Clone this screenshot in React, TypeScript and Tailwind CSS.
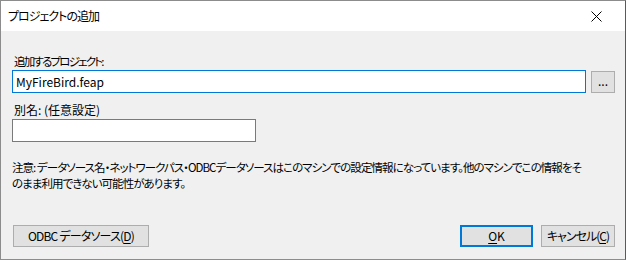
import React from 'react';

const font = "font-['Noto_Sans_CJK_JP','Noto_Sans',sans-serif] [font-feature-settings:'palt']";

function Btn({ children, primary = false, className = '' }: { children: React.ReactNode; primary?: boolean; className?: string }) {
  return (
    <button
      className={`h-[22px] shrink-0 whitespace-nowrap bg-[#e1e1e1] text-[12px] leading-none text-black flex items-center justify-center ${
        primary ? 'border-2 border-[#0078d7]' : 'border border-[#adadad]'
      } ${className}`}
    >
      {children}
    </button>
  );
}

export default function App() {
  return (
    <div className={`w-[626px] h-[260px] bg-[#f0f0f0] border border-[#8c8c8c] border-r-[#5a5a5a] flex flex-col overflow-hidden ${font}`}>
      {/* Title bar */}
      <div className="h-[30px] bg-white flex items-center justify-between pl-[7px] pr-[23px] shrink-0">
        <span className="text-[12px] text-black leading-none tracking-[-1px]">プロジェクトの追加</span>
        <svg width="11" height="11" viewBox="0 0 11 11" className="block">
          <path d="M0.5 0.5 L10.5 10.5 M10.5 0.5 L0.5 10.5" stroke="#000" strokeWidth="1" fill="none" />
        </svg>
      </div>

      {/* Body */}
      <div className="flex-1 flex flex-col pl-[11px] pr-[10px] pt-[22px] text-[12px] leading-[16px] text-black">
        <div className="pl-[2px] text-[11.5px] tracking-[-1.8px] whitespace-nowrap">追加するプロジェクト:</div>
        <div className="mt-[1px] flex items-start gap-[5px]">
          <div className="flex-1 h-[23px] bg-white border border-[#0078d7] flex items-center pl-[3px]">
            MyFireBird.feap
          </div>
          <Btn className="w-[24px] h-[21px] mt-[1px] !items-end pb-[5px]">...</Btn>
        </div>

        <div className="mt-[9px] pl-[2px]">別名: (任意設定)</div>
        <div className="mt-[1px] w-[244px] h-[23px] bg-white border border-[#7a7a7a]" />

        <div className="mt-[17px] whitespace-nowrap text-[11.5px] tracking-[-0.95px]">
          <div>注意: データソース名・ネットワークパス・ODBCデータソースはこのマシンでの設定情報になっています。他のマシンでこの情報をそ</div>
          <div>のまま利用できない可能性があります。</div>
        </div>

        <div className="mt-[34px] flex items-start">
          <Btn className="w-[136px] ml-[1px] tracking-[-0.8px]">
            ODBC データソース(<span className="underline underline-offset-2">D</span>)
          </Btn>
          <div className="flex-1" />
          <Btn primary className="w-[73px]">
            <span className="underline underline-offset-2">O</span>K
          </Btn>
          <Btn className="w-[74px] ml-[8px] tracking-[-1px]">
            キャンセル(<span className="underline underline-offset-2">C</span>)
          </Btn>
        </div>
      </div>
    </div>
  );
}
